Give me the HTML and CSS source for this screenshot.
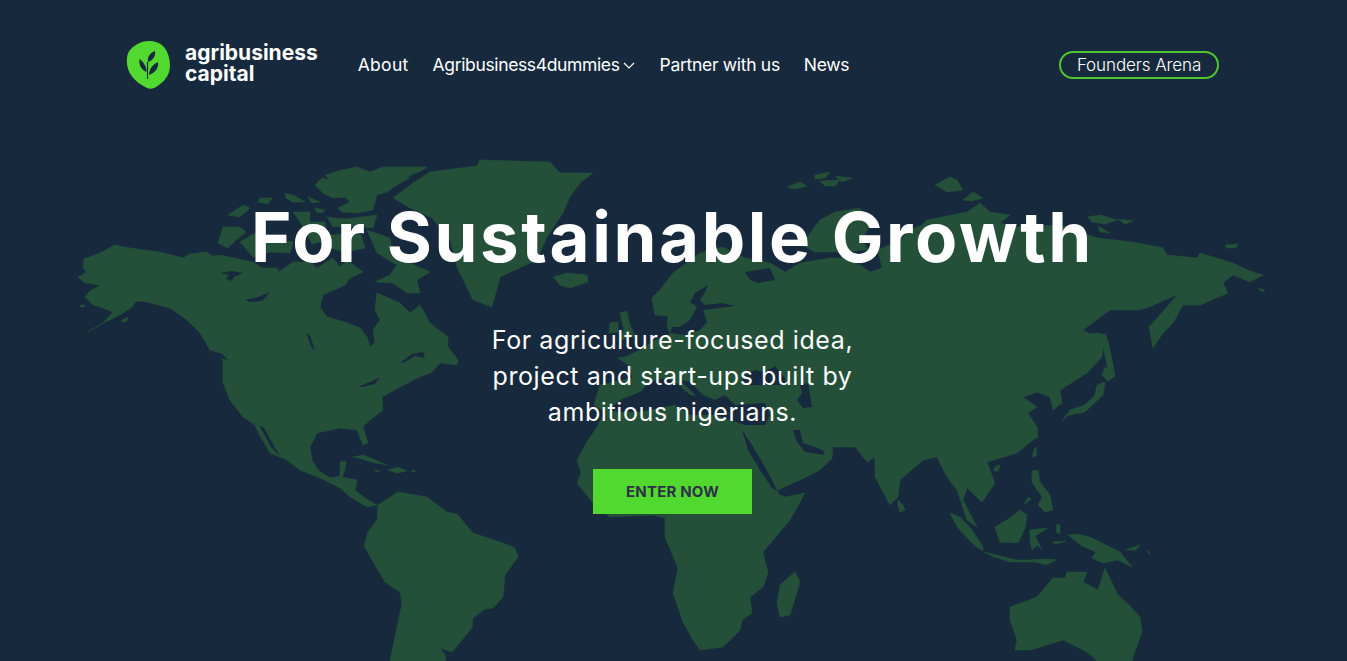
FILE: index.html
```html
<!DOCTYPE html>
<html lang="en">
<head>
<title>Agribusiness Capital</title>
<meta charset="UTF-8">
<meta name="viewport" content="width=device-width, initial-scale=1">
<link rel="stylesheet" href="styles.css">
</head>
<body>
<svg class="map" viewBox="0 0 1347 661" aria-hidden="true">
 <g class="land">
  <!-- north america -->
  <path d="M78 277L87 272 83 268 84 259 100 253 115 245 130 248 160 252 183 258 190 254 207 252 212 256 220 255 253 262 262 268 277 268 279 272 293 262 310 262 317 268 333 258 340 267 347 260 363 272 350 278 345 285 323 295 320 307 327 317 345 322 360 328 367 337 370 347 375 342 373 330 380 320 375 310 377 293 400 303 410 313 420 305 430 323 440 331 448 337 448 347 458 360 457 365 440 363 432 372 417 378 400 387 382 397 383 410 370 420 363 427 368 443 363 445 357 430 340 428 317 433 310 447 312 460 318 470 330 478 340 476 340 462 346 461 345 470 342 477 357 480 355 490 365 498 377 505 367 507 350 497 340 488 320 478 300 470 287 460 270 453 258 432 255 425 243 417 230 400 223 383 223 360 210 350 200 333 187 320 170 308 147 302 136 301 132 307 123 313 100 325 88 332 103 323 113 312 100 307 93 305 85 297 90 291 100 285 85 283Z"/>
  <path d="M122 320L128 317 127 321 122 322Z"/>
  <path d="M80 305L85 305 84 307 81 307Z"/>
  <!-- south america -->
  <path d="M378 505L398 492 427 497 447 512 457 514 473 533 503 543 515 548 518 557 505 575 503 597 493 608 485 609 473 618 472 628 452 652 440 648 446 657 445 661 390 661 402 603 400 592 385 582 364 546 368 532 377 520Z"/>
  <!-- eurasia and africa, inland seas are laid over this -->
  <path d="M652 298L660 290 673 273 700 253 723 247 745 258 770 263 785 272 800 263 830 258 850 258 870 272 882 268 878 250 900 240 910 230 922 225 927 220 967 212 980 203 990 212 1010 215 1000 223 1017 227 1060 225 1097 238 1133 242 1163 248 1167 255 1197 258 1200 253 1233 263 1247 270 1263 275 1250 282 1233 275 1223 283 1228 293 1200 305 1183 305 1173 323 1163 333 1153 348 1149 327 1167 307 1178 294 1165 300 1147 308 1137 310 1110 310 1083 330 1090 334 1097 333 1105 335 1102 357 1087 373 1073 382 1060 390 1062 403 1053 410 1050 397 1037 392 1023 397 1037 407 1028 413 1037 427 1038 437 1033 440 1017 453 987 462 995 483 982 502 967 488 963 500 977 527 967 520 957 490 947 477 937 457 923 460 900 480 898 497 890 505 875 477 875 457 867 462 855 447 833 447 832 458 820 470 800 480 778 490 778 494 785 497 805 493 790 520 763 552 768 573 763 587 750 597 752 613 742 620 740 630 723 647 700 650 693 640 683 622 673 593 678 568 665 537 665 518 652 515 610 517 593 503 577 483 581 473 577 460 588 440 595 430 605 412 594 405 600 385 633 378 628 365 618 358 625 357 640 350 655 340 670 335 667 325 668 316 655 315Z"/>
  <!-- australia -->
  <path d="M1010 607L1037 597 1053 578 1065 578 1067 572 1087 572 1083 582 1098 590 1105 568 1118 595 1130 606 1140 617 1142 632 1133 657 1132 661 1097 661 1093 657 1087 652 1063 640 1047 645 1030 650 1015 650 1017 640 1010 620Z"/>
  <!-- greenland -->
  <path d="M393 198L413 183 430 172 477 166 480 160 550 162 560 173 593 173 580 183 570 197 563 213 547 237 537 260 500 277 492 307 473 300 457 267 450 240 432 218 410 208Z"/>
  <!-- arctic islands -->
  <path d="M315 185L322 178 330 180 325 175 342 170 357 167 370 172 383 167 427 167 423 170 407 177 410 178 397 185 387 192 377 195 373 210 357 213 342 212 338 208 350 202 345 197 333 198 323 193Z"/>
  <path d="M327 217L345 219 377 215 373 228 355 226 333 227Z"/>
  <path d="M367 230L390 238 393 258 412 264 430 272 417 280 420 293 407 293 393 283 375 282 390 275 397 265 377 253Z"/>
  <path d="M218 243L223 227 240 227 246 232 236 240 228 248Z"/>
  <path d="M240 242L255 233 272 238 293 242 290 253 270 252 253 257Z"/>
  <path d="M228 215L243 205 250 208 240 217Z"/>
  <path d="M260 198L272 198 268 204 258 202Z"/>
  <path d="M285 193L295 196 305 202 293 202 286 198Z"/>
  <path d="M308 197L320 202 312 203Z"/>
  <path d="M315 208L325 210 322 213 316 212Z"/>
  <path d="M293 212L310 212 310 222 300 222Z"/>
  <path d="M330 235L360 232 365 248 345 252 330 248Z"/>
  <path d="M300 222L325 222 328 240 312 244Z"/>
  <!-- north atlantic and europe -->
  <path d="M553 277L567 273 587 275 588 282 570 288 560 285Z"/>
  <path d="M620 313L627 311 630 325 635 336 620 340 624 330Z"/>
  <path d="M610 323L618 322 618 332 609 333Z"/>
  <path d="M787 187L800 182 807 186 795 189Z"/>
  <path d="M815 175L830 172 825 178 815 179Z"/>
  <path d="M820 181L840 180 835 186 825 186Z"/>
  <path d="M835 176L852 178 842 182Z"/>
  <path d="M802 245L808 236 820 220 835 212 860 208 870 225 862 240 868 250 855 251 830 252 815 252Z"/>
  <!-- russian arctic -->
  <path d="M935 185L950 177 957 180 963 190 947 192Z"/>
  <path d="M963 200L973 192 983 198 972 201Z"/>
  <path d="M1088 217L1100 215 1117 220 1105 224 1092 222Z"/>
  <path d="M1118 219L1133 221 1125 224Z"/>
  <path d="M1098 226L1110 233 1100 232Z"/>
  <path d="M1225 245L1238 244 1236 248 1227 248Z"/>
  <path d="M1258 288L1265 290 1262 292Z"/>
  <path d="M1105 333L1109 345 1115 375 1110 378 1107 365 1103 345Z"/>
  <path d="M1097 385L1105 382 1103 395 1085 412 1065 416 1063 421 1070 410 1085 405 1095 395Z"/>
  <path d="M1105 367L1115 376 1108 381 1102 375Z"/>
  <!-- caribbean -->
  <path d="M353 457L363 455 375 460 387 465 375 463 362 459Z"/>
  <path d="M388 470L398 467 407 471 397 473Z"/>
  <path d="M375 470L380 471 376 472Z"/>
  <path d="M412 470L416 471 412 472Z"/>
  <!-- madagascar, sri lanka, se asia -->
  <path d="M795 572L800 582 790 615 780 617 777 603 780 585Z"/>
  <path d="M898 500L903 505 905 510 900 512 898 506Z"/>
  <path d="M1035 448L1037 447 1036 456 1032 457Z"/>
  <path d="M995 467L1000 465 998 471 994 471Z"/>
  <path d="M1032 471L1038 470 1040 482 1050 495 1053 510 1045 512 1038 505 1042 497 1032 482Z"/>
  <path d="M1028 497L1031 499 1024 505Z"/>
  <path d="M995 527L1010 518 1020 510 1027 515 1025 528 1018 543 1000 542Z"/>
  <path d="M950 513L960 517 972 530 983 547 983 551 975 546 958 528Z"/>
  <path d="M984 552L1000 556 1017 560 1055 560 1040 562 1010 562 992 556Z"/>
  <path d="M1030 560L1048 559 1056 560 1046 565Z"/>
  <path d="M1030 530L1048 528 1040 533 1035 536 1042 549 1037 545 1032 550 1030 540Z"/>
  <path d="M1057 524L1060 525 1060 534 1056 532Z"/>
  <path d="M1052 542L1066 541 1056 544Z"/>
  <path d="M1068 535L1076 534 1090 537 1120 552 1132 567 1118 560 1103 563 1092 558 1096 552 1082 546Z"/>
  <path d="M1126 550L1140 545 1136 550Z"/>
  <path d="M1147 550L1150 553 1149 554Z"/>
 </g>
 <g class="water">
  <path d="M220 273L232 271 243 273 234 277 232 281 226 279 229 275Z"/>
  <path d="M245 300L258 297 270 292 262 301 250 302Z"/>
  <path d="M306 333L310 336 315 350 312 348Z"/>
  <path d="M358 387L370 382 380 377 375 384 362 387Z"/>
  <path d="M400 363L412 354 423 352 425 358 415 356 405 362Z"/>
  <path d="M193 330L199 332 200 342 196 340Z"/>
  <path d="M210 350L222 354 228 360 220 358Z"/>
  <path d="M259 425L264 428 275 448 280 456 271 447Z"/>
  <path d="M708 285L695 293 690 302 697 307 690 320 680 327 672 327 670 333 685 335 700 330 707 322 703 310 735 306 722 303 705 305 700 300 705 292Z"/>
  <path d="M745 272L770 268 775 280 758 283 750 280Z"/>
  <path d="M745 375L755 370 765 372 775 366 785 378 785 385 765 385 750 385 742 382Z"/>
  <path d="M800 385L808 383 810 395 812 407 803 408 797 400 802 393Z"/>
  <path d="M608 410L620 400 640 392 650 382 665 378 675 382 690 395 696 396 680 380 690 382 703 395 715 400 725 395 735 405 765 403 770 415 765 425 745 425 730 420 715 415 690 415 675 405 660 408 640 412 620 412Z"/>
  <path d="M742 430L752 445 762 462 772 480 778 492 772 488 760 470 748 450Z"/>
  <path d="M793 430L800 430 803 443 823 450 825 455 805 452 797 442Z"/>
 </g>
</svg>

<header class="topbar">
 <a class="brand" href="#">
  <svg class="brand-mark" viewBox="126 40 45 50">
   <path class="blob" d="M127.500 55C129 49 136 44 142 42 149 40 158 41 163 46 168 51 170 59 170 66 170 74 165 81 159 85 155 88 151 90 147 88 141 85 135 81 131 75 127 69 126 61 127.500 55Z"/>
   <path class="leaf" d="M148 62C147 57 150 53 155 51 156 56 153 60 148 62Z"/>
   <path class="leaf" d="M146.500 72C147 67 143 61 139.500 59 138.500 64 141 70 146.500 72Z"/>
   <path class="leaf" d="M149 75C149 69 153 64 158 62 159 68 155 73 149 75Z"/>
   <path class="stem" d="M147.500 62V79"/>
  </svg>
  <span class="brand-name">agribusiness<br>capital</span>
 </a>
 <nav class="menu">
  <a href="#">About</a>
  <a href="#">Agribusiness4dummies<svg class="chev" viewBox="0 0 12 7"><path d="M1 1l5 5 5-5"/></svg></a>
  <a href="#">Partner with us</a>
  <a href="#">News</a>
 </nav>
 <a class="pill" href="#">Founders Arena</a>
</header>

<main class="hero">
 <h1>For Sustainable Growth</h1>
 <p>For agriculture-focused idea,<br>project and start-ups built by<br>ambitious nigerians.</p>
 <a class="cta" href="#">ENTER NOW</a>
</main>
</body>
</html>
```
FILE: styles.css
```css
html { background: #17293c; }
body { margin: 0; height: 661px; overflow: hidden; position: relative; color: #fff;
       font-family: Inter, "Liberation Sans", sans-serif; }
a { color: inherit; text-decoration: none; }

.map { position: absolute; left: 0; top: 0; width: 1347px; height: 661px; }
.land { fill: #245039; stroke: #245039; stroke-width: 0.6; stroke-linejoin: round; }
.water { fill: #17293c; }

.topbar { position: relative; display: flex; align-items: center; padding: 40px 128px 0 126px; height: 50px; }
.brand { display: flex; align-items: center; gap: 14px; }
.brand-mark { width: 45px; height: 50px; display: block; }
.blob { fill: #52d92f; }
.leaf { fill: #17293c; }
.stem { stroke: #17293c; stroke-width: 1.2; fill: none; }
.brand-name { font-size: 21px; font-weight: 700; line-height: 21px; margin-top: -4px; }

.menu { display: flex; gap: 24px; margin-left: 40px; font-size: 17.500px; letter-spacing: -0.3px; margin-top: -2px; }
.menu a:first-child { letter-spacing: 0.3px; }
.menu a:nth-child(2) { letter-spacing: -0.36px; margin-right: 1px; }
.chev { width: 12px; height: 7px; margin-left: 3px; vertical-align: 2px; }
.chev path { fill: none; stroke: #fff; stroke-width: 1.2; }

.pill { margin-left: auto; box-sizing: border-box; width: 160px; height: 28px; line-height: 24px; text-align: center;
        border: 2px solid #4fc52f; border-radius: 14px; font-size: 17px; font-weight: 300; letter-spacing: -0.1px; }

.hero { position: relative; display: flex; flex-direction: column; align-items: center; padding-right: 2px; }
.hero h1 { margin: 105px 0 0; font-size: 69px; font-weight: 700; line-height: 84px; letter-spacing: 2.600px; }
.hero p { margin: 43px 0 0; font-size: 25px; line-height: 36px; text-align: center; letter-spacing: 0.600px; }
.cta { margin-top: 39px; width: 159px; height: 45px; text-align: center; background: #52d92f;
       color: #2d3047; font-size: 15px; font-weight: 700; line-height: 45px; letter-spacing: 0.200px; }
```
